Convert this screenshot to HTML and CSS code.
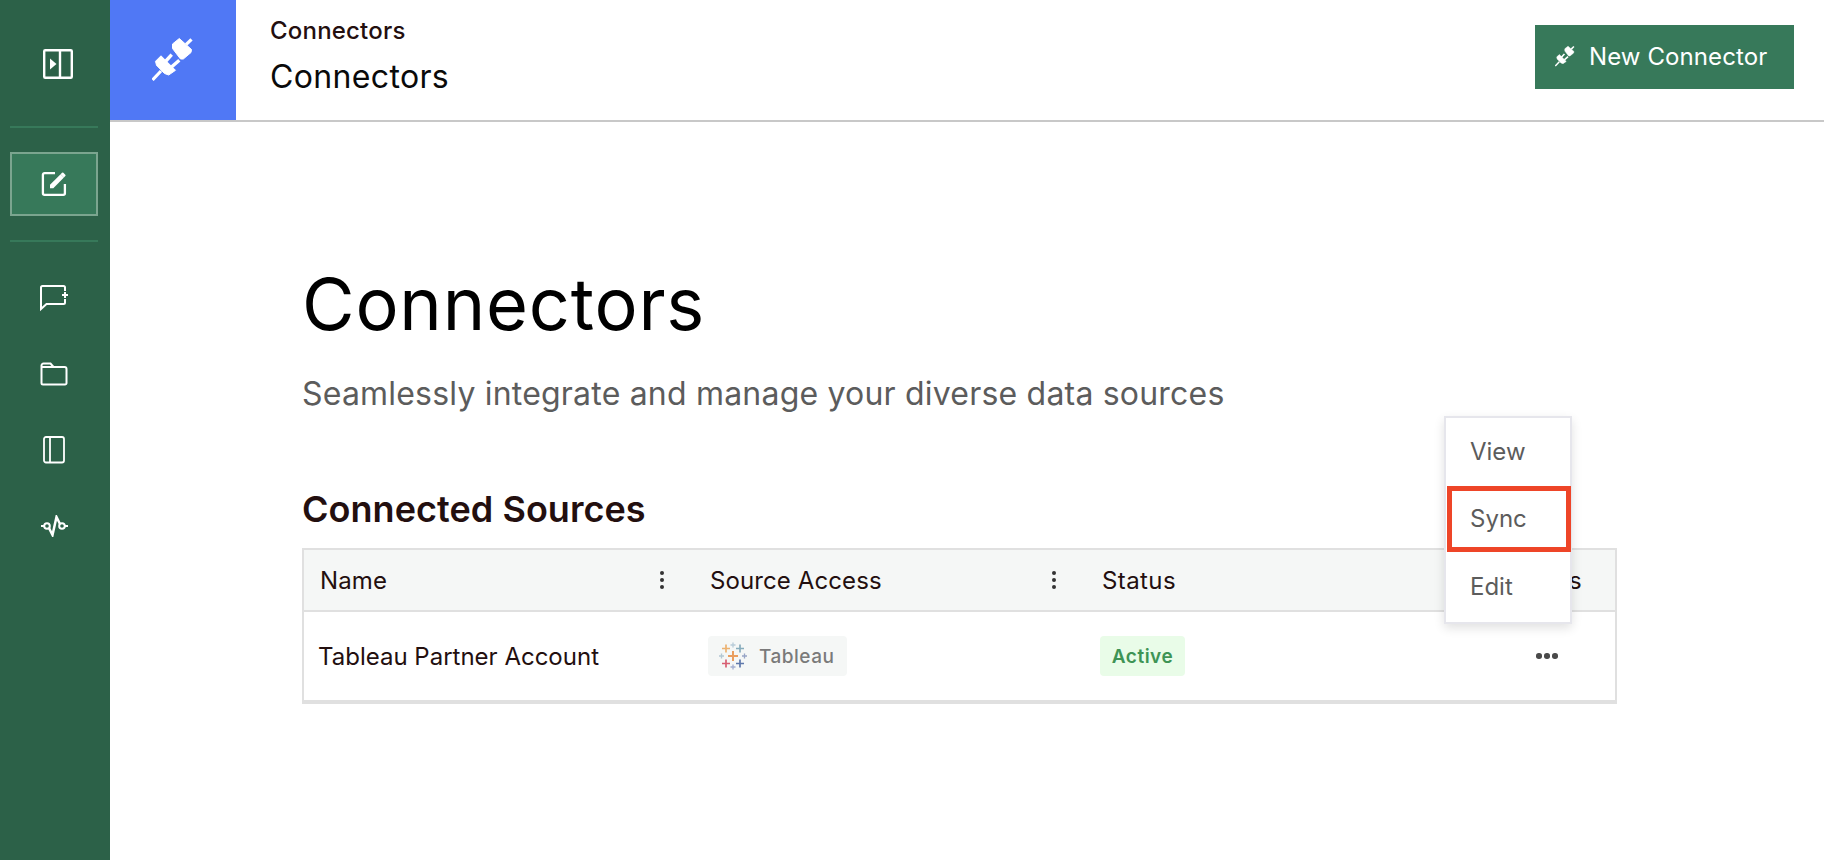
FILE: index.html
```html
<!DOCTYPE html>
<html>
<head>
    <title>Connectors</title>
    <meta charset="UTF-8">
    <link rel="stylesheet" href="styles.css">
</head>
<body>

    <!-- Sidebar -->
    <nav class="sidebar">
        <div class="side-top">
            <svg width="32" height="32" viewBox="0 0 32 32" fill="none" stroke="#fff" stroke-width="2.400">
                <rect x="2.200" y="2.200" width="27.600" height="27.600" rx="1"/>
                <path d="M18 2v28"/>
                <path d="M8 10.500v11l6.500-5.500z" fill="#fff" stroke="none"/>
            </svg>
        </div>
        <div class="side-line"></div>
        <div class="side-item active">
            <svg width="26" height="26" viewBox="0 0 26 26" fill="none" stroke="#fff" stroke-width="2.300">
                <path d="M14 2.200H3.500a1.600 1.600 0 0 0-1.600 1.600v18.400a1.600 1.600 0 0 0 1.600 1.600h18.800a1.600 1.600 0 0 0 1.600-1.600V13"/>
                <path d="M9 17.200v-3.400L19.600 3.200l3.300 3.300L12.300 17.200z" fill="#fff" stroke="none"/>
                <path d="M19.600 3.200l1.400-1.400a1 1 0 0 1 1.400 0l1.900 1.900a1 1 0 0 1 0 1.400l-1.400 1.400z" fill="#fff" stroke="none"/>
            </svg>
        </div>
        <div class="side-line"></div>
        <div class="side-list">
            <div class="side-link">
                <svg width="30" height="28" viewBox="0 0 30 28" fill="none" stroke="#fff" stroke-width="2">
                    <path d="M26 7V3.500A1.500 1.500 0 0 0 24.500 2h-21A1.500 1.500 0 0 0 2 3.500V25l5.500-5h17a1.500 1.500 0 0 0 1.500-1.500V15"/>
                    <path d="M23 11h6M26 8v6"/>
                </svg>
            </div>
            <div class="side-link">
                <svg width="28" height="24" viewBox="0 0 28 24" fill="none" stroke="#fff" stroke-width="2">
                    <path d="M1.500 21V3.500a2 2 0 0 1 2-2h7l3 3.500h11a2 2 0 0 1 2 2V21a1.500 1.500 0 0 1-1.500 1.500H3A1.500 1.500 0 0 1 1.500 21z"/>
                    <path d="M1.500 5H13"/>
                </svg>
            </div>
            <div class="side-link">
                <svg width="22" height="28" viewBox="0 0 22 28" fill="none" stroke="#fff" stroke-width="1.800">
                    <rect x="1" y="1" width="20" height="25.500" rx="2"/>
                    <path d="M7 1v25.500"/>
                </svg>
            </div>
            <div class="side-link">
                <svg width="28" height="22" viewBox="0 0 28 22" fill="none" stroke="#fff" stroke-width="2">
                    <circle cx="7" cy="11" r="2.800"/>
                    <circle cx="22" cy="11" r="2.800"/>
                    <path d="M1 11h3M25 11h3"/>
                    <path d="M9 13l3.500 7L16.500 2l3.500 7" stroke-width="2.500"/>
                </svg>
            </div>
        </div>
    </nav>

    <div class="main">
        <!-- Header -->
        <header class="header">
            <div class="header-icon">
                <svg width="46" height="46" viewBox="0 0 46 46"><use href="#plug"/></svg>
            </div>
            <div class="header-titles">
                <div class="crumb">Connectors</div>
                <div class="page-title">Connectors</div>
            </div>
            <button class="new-btn" type="button">
                <svg width="22" height="22" viewBox="0 0 46 46"><use href="#plug"/></svg>
                New Connector
            </button>
        </header>

        <!-- Page content -->
        <main class="content">
            <h1>Connectors</h1>
            <p class="subtitle">Seamlessly integrate and manage your diverse data sources</p>
            <h2>Connected Sources</h2>

            <div class="table-wrap">
                <div class="table">
                    <div class="row head">
                        <div class="cell col-name">Name<span class="kebab"><i></i><i></i><i></i></span></div>
                        <div class="cell col-source">Source Access<span class="kebab"><i></i><i></i><i></i></span></div>
                        <div class="cell col-status">Status</div>
                        <div class="cell col-actions">Actions</div>
                    </div>
                    <div class="row body">
                        <div class="cell col-name">Tableau Partner Account</div>
                        <div class="cell col-source">
                            <span class="pill pill-source">
                                <svg class="logo" width="28" height="28" viewBox="0 0 28 28" fill="none" stroke-width="1.700">
                                    <path d="M14 9v10M9 14h10" stroke="#e8883a" stroke-width="2"/>
                                    <path d="M7 2.500v8M3 6.500h8" stroke="#eba14f"/>
                                    <path d="M21 2.500v8M17 6.500h8" stroke="#6d9bb0"/>
                                    <path d="M7 17.500v8M3 21.500h8" stroke="#d13a52"/>
                                    <path d="M21 17.500v8M17 21.500h8" stroke="#3a5a9a"/>
                                    <path d="M14 .5v5M11.500 3h5" stroke="#a9c2d2" stroke-width="1.300"/>
                                    <path d="M14 22.500v5M11.500 25h5" stroke="#8e9cc6" stroke-width="1.300"/>
                                    <path d="M2.500 11.500v5M0 14h5" stroke="#a3bccb" stroke-width="1.300"/>
                                    <path d="M25.500 11.500v5M23 14h5" stroke="#8090bb" stroke-width="1.300"/>
                                </svg>
                                Tableau
                            </span>
                        </div>
                        <div class="cell col-status"><span class="pill pill-active">Active</span></div>
                        <div class="cell col-actions"><span class="dots"><i></i><i></i><i></i></span></div>
                    </div>
                </div>

                <!-- Row action menu -->
                <div class="menu">
                    <div class="menu-item">View</div>
                    <div class="menu-item marked">Sync</div>
                    <div class="menu-item last">Edit</div>
                </div>
            </div>
        </main>
    </div>

    <svg class="defs" width="0" height="0">
        <defs>
            <g id="plug" fill="#fff" stroke="#fff" stroke-linejoin="round" stroke-width="1">
                <path d="M20.500 8L27.300 2.500 39.500 13.500 39 16.500 31.300 23 28.500 23 20.500 12.500z"/>
                <path d="M34 8.700L39.500 3.300" stroke-width="3.200"/>
                <path d="M3.500 25.300L9 19.800 23.500 34.300 16.700 39 12.500 37.500 4.500 29.300z"/>
                <path d="M0.500 44L9 35" stroke-width="3.200"/>
                <path d="M13 26L19.700 18.700M19.500 31L27.300 24.300" stroke-width="3.400"/>
            </g>
        </defs>
    </svg>

</body>
</html>
```

FILE: styles.css
```css
* {
    box-sizing: border-box;
}

body {
    font-family: Inter, "Noto Sans", sans-serif;
    background-color: #ffffff;
    margin: 0;
    padding: 0;
    height: 860px;
    display: flex;
    overflow: hidden;
    color: #000;
}

.defs {
    position: absolute;
}

/* Sidebar */
.sidebar {
    width: 110px;
    flex-shrink: 0;
    background-color: #2c6148;
    padding: 0 12px 0 10px;
    display: flex;
    flex-direction: column;
}

.side-top {
    height: 126px;
    display: flex;
    justify-content: center;
    padding: 48px 0 0 8px;
}

.side-line {
    height: 2px;
    background-color: #37795a;
}

.side-item {
    height: 64px;
    margin: 24px 0;
    background-color: #37795a;
    border: 2px solid #7ba58f;
    display: flex;
    align-items: center;
    justify-content: center;
}

.side-list {
    display: flex;
    flex-direction: column;
    padding-top: 18px;
}

.side-link {
    height: 76px;
    display: flex;
    align-items: center;
    justify-content: center;
}

/* Header */
.main {
    flex: 1;
    min-width: 0;
    display: flex;
    flex-direction: column;
}

.header {
    height: 122px;
    flex-shrink: 0;
    display: flex;
    align-items: stretch;
    border-bottom: 2px solid #c8c8c8;
    padding-right: 30px;
}

.header-icon {
    width: 126px;
    background-color: #5078f5;
    display: flex;
    align-items: center;
    justify-content: center;
    padding: 0 0 2px 3px;
}

.header-titles {
    flex: 1;
    padding: 17px 0 0 34px;
}

.crumb {
    font-size: 24px;
    font-weight: 500;
    line-height: 28px;
    color: #230f0f;
    letter-spacing: 0.2px;
}

.page-title {
    font-size: 32px;
    line-height: 36px;
    margin-top: 14px;
    color: #0a0a0a;
    letter-spacing: 0.35px;
}

.new-btn {
    align-self: flex-start;
    margin-top: 25px;
    width: 259px;
    height: 64px;
    background-color: #37795a;
    color: #fff;
    border: none;
    font-family: inherit;
    font-size: 24px;
    letter-spacing: 0.1px;
    display: flex;
    align-items: center;
    gap: 12px;
    padding: 0 0 2px 20px;
}

/* Content */
.content {
    flex: 1;
    padding: 0 207px 0 192px;
}

h1 {
    font-size: 72px;
    font-weight: 400;
    line-height: 80px;
    margin: 142px 0 0;
    color: #000;
    letter-spacing: 0.8px;
}

.subtitle {
    font-size: 32px;
    line-height: 40px;
    margin: 30px 0 0;
    color: #5c5c5c;
    letter-spacing: 0.2px;
}

h2 {
    font-size: 36px;
    font-weight: 600;
    line-height: 44px;
    margin: 73px 0 0;
    color: #230f0f;
    letter-spacing: 0.05px;
}

.table-wrap {
    position: relative;
    margin-top: 17px;
}

.table {
    border: 2px solid #e0e0e0;
    border-bottom-width: 4px;
}

.row {
    display: flex;
}

.row.head {
    height: 62px;
    background-color: #f5f7f6;
    border-bottom: 2px solid #e0e0e0;
    font-size: 24px;
    letter-spacing: 0.1px;
    color: #230f0f;
}

.row.body {
    height: 88px;
    font-size: 24px;
    color: #230f0f;
}

.cell {
    display: flex;
    align-items: center;
    position: relative;
}

.col-name {
    width: 392px;
    padding-left: 16px;
}

.row.body .col-name {
    padding-left: 14px;
}

.col-source {
    width: 392px;
    padding-left: 14px;
}

.col-status {
    width: 366px;
    padding-left: 14px;
    letter-spacing: 0.4px;
}

.col-actions {
    flex: 1;
    padding-left: 42px;
}

.row.body .col-source {
    padding-left: 12px;
}

.row.body .col-status {
    padding-left: 12px;
}

.row.body .col-actions {
    padding-left: 82px;
}

.kebab {
    position: absolute;
    right: 32px;
    display: flex;
    flex-direction: column;
    gap: 3px;
}

.kebab i {
    display: block;
    width: 4px;
    height: 4px;
    border-radius: 50%;
    background-color: #333;
}

.dots {
    display: flex;
    gap: 2.500px;
}

.dots i {
    display: block;
    width: 5.500px;
    height: 5.500px;
    border-radius: 50%;
    background-color: #4a4a4a;
}

.pill {
    display: inline-flex;
    align-items: center;
    height: 40px;
    border-radius: 4px;
    font-size: 19px;
    letter-spacing: 0.5px;
}

.pill-source {
    width: 139px;
    padding-left: 11px;
    gap: 12px;
    background-color: #f5f7f6;
    color: #7a7a7a;
    font-weight: 500;
}

.logo {
    opacity: 0.8;
}

.pill-active {
    width: 85px;
    justify-content: center;
    background-color: #e9fce8;
    color: #3e9455;
    font-weight: 600;
}

/* Menu */
.menu {
    position: absolute;
    top: -132px;
    right: 45px;
    width: 128px;
    height: 208px;
    background-color: #fff;
    border: 2px solid #e6e6ec;
    box-shadow: 0 4px 10px rgba(0,0,0,0.12);
    display: flex;
    flex-direction: column;
}

.menu-item {
    height: 68px;
    display: flex;
    align-items: center;
    padding: 0 0 1px 24px;
    font-size: 24px;
    color: #5c5c5c;
}

.menu-item.marked {
    height: 66px;
    margin: 0 -1px 0 1px;
    outline: 5px solid #ee4528;
    outline-offset: -5px;
    padding-left: 23px;
}

.menu-item.last {
    height: 70px;
}
```
